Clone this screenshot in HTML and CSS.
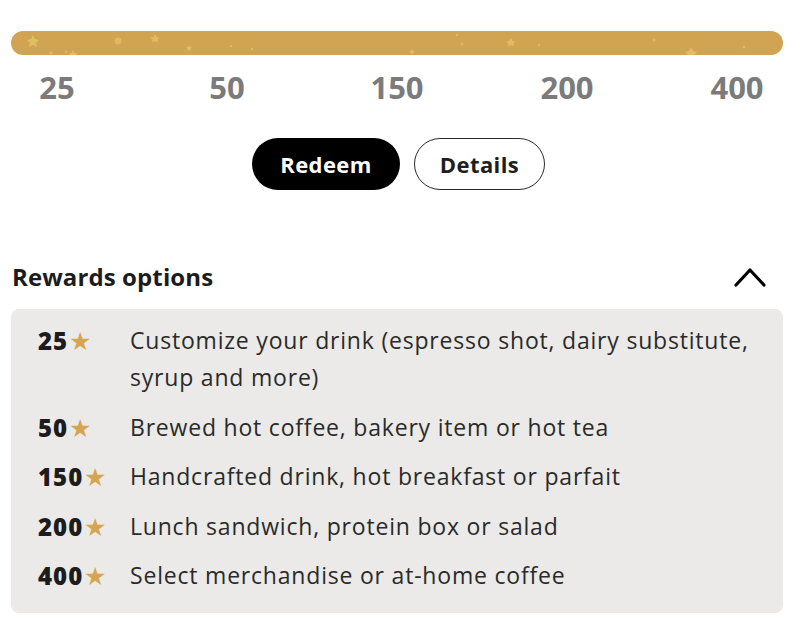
FILE: index.html
```html
<!DOCTYPE html>
<html>
<head>
  <title>Rewards</title>
  <link rel="stylesheet" href="styles.css">
</head>
<body>
  <div class="page">
    <div class="progress">
      <svg class="sparkles" width="772" height="24" viewBox="0 0 772 24">
        <g fill="#e8c466" opacity="0.8">
          <path d="M22 4 l2 4 4 1 -3 3 1 4 -4 -2 -4 2 1 -4 -3 -3 4 -1z"/>
          <path d="M144 3 l1.5 3 3 .5 -2 2 .5 3 -3 -1.5 -3 1.5 .5 -3 -2 -2 3 -.5z"/>
          <path d="M62 19 l1.5 3 3 .5 -2 2 .5 3 -3 -1.5 -3 1.5 .5 -3 -2 -2 3 -.5z"/>
          <path d="M178 14 l1 2 2 .4 -1.5 1.4 .4 2 -1.9 -1 -1.9 1 .4 -2 -1.5 -1.4 2 -.4z"/>
          <path d="M500 7 l1.5 3 3 .5 -2 2 .5 3 -3 -1.5 -3 1.5 .5 -3 -2 -2 3 -.5z"/>
          <path d="M680 16 l2 4 4 1 -3 3 1 4 -4 -2 -4 2 1 -4 -3 -3 4 -1z"/>
        </g>
        <g fill="#e8c466" opacity="0.7">
          <circle cx="107" cy="10" r="3.5"/>
          <circle cx="220" cy="15" r="1.2"/>
          <circle cx="241" cy="18" r="1.2"/>
          <circle cx="401" cy="21" r="2"/>
          <circle cx="446" cy="4" r="1.2"/>
          <circle cx="451" cy="13" r="1.5"/>
          <circle cx="528" cy="14" r="1.2"/>
          <circle cx="643" cy="9" r="1.5"/>
          <circle cx="733" cy="16" r="1.5"/>
          <circle cx="40" cy="22" r="1.5"/>
          <circle cx="55" cy="21" r="1.5"/>
        </g>
      </svg>
    </div>

    <div class="levels">
      <span>25</span>
      <span>50</span>
      <span>150</span>
      <span>200</span>
      <span>400</span>
    </div>

    <div class="actions">
      <button class="btn btn-dark">Redeem</button>
      <button class="btn btn-outline">Details</button>
    </div>

    <div class="section-head">
      <h2>Rewards options</h2>
      <svg class="chevron" width="32" height="20" viewBox="0 0 32 20">
        <path d="M2 18 L16 3 L30 18" fill="none" stroke="#000" stroke-width="3.2" stroke-linecap="round" stroke-linejoin="round"/>
      </svg>
    </div>

    <div class="options">
      <div class="option">
        <div class="cost">25<span class="star">★</span></div>
        <div class="desc">Customize your drink (espresso shot, dairy substitute, syrup and more)</div>
      </div>
      <div class="option">
        <div class="cost">50<span class="star">★</span></div>
        <div class="desc">Brewed hot coffee, bakery item or hot tea</div>
      </div>
      <div class="option">
        <div class="cost">150<span class="star">★</span></div>
        <div class="desc">Handcrafted drink, hot breakfast or parfait</div>
      </div>
      <div class="option">
        <div class="cost">200<span class="star">★</span></div>
        <div class="desc">Lunch sandwich, protein box or salad</div>
      </div>
      <div class="option">
        <div class="cost">400<span class="star">★</span></div>
        <div class="desc">Select merchandise or at-home coffee</div>
      </div>
    </div>
  </div>
</body>
</html>
```

FILE: styles.css
```css
body {
  margin: 0;
  background: #fff;
  font-family: "Open Sans", Arial, sans-serif;
  color: #1f1f1f;
}

.page {
  padding: 31px 17px 0 11px;
}

.progress {
  height: 24px;
  border-radius: 12px;
  background-color: #d0a453;
  overflow: hidden;
}

.sparkles {
  display: block;
}

.levels {
  display: grid;
  grid-template-columns: repeat(5, 110px);
  column-gap: 60px;
  margin: 12px 0 0 -9px;
  font-size: 31px;
  font-weight: 700;
  color: #7b7b7b;
  text-align: center;
  line-height: 40px;
}

.actions {
  display: flex;
  justify-content: center;
  gap: 14px;
  margin-top: 31px;
  padding-left: 3px;
}

.btn {
  height: 52px;
  border-radius: 26px;
  font-family: "Open Sans", Arial, sans-serif;
  font-size: 22px;
  font-weight: 700;
  letter-spacing: 0.4px;
}

.btn-dark {
  width: 148px;
  background: #000;
  color: #fff;
  border: none;
}

.btn-outline {
  width: 131px;
  background: #fff;
  color: #1e1e1e;
  border: 1.5px solid #2a2a2a;
}

.section-head {
  display: flex;
  justify-content: space-between;
  align-items: center;
  margin-top: 70px;
}

.section-head h2 {
  margin: 0;
  padding-left: 1px;
  font-size: 24px;
  font-weight: 700;
  letter-spacing: 0.1px;
  color: #1c1c1c;
}

.chevron {
  display: block;
  margin-right: 17px;
}

.options {
  margin-top: 16px;
  padding: 13px 0 19px 27px;
  background: #ebeae8;
  border-radius: 8px;
  display: flex;
  flex-direction: column;
  gap: 12.5px;
}

.option {
  display: flex;
  font-size: 23px;
  line-height: 37px;
}

.cost {
  width: 92px;
  flex: none;
  font-size: 24px;
  font-weight: 800;
  letter-spacing: 1px;
  color: #1c1c1c;
}

.star {
  margin-left: 1px;
  font-size: 25px;
  color: #d6a54f;
  font-weight: 400;
}

.desc {
  max-width: 630px;
  color: #2a2a2a;
  letter-spacing: 0.8px;
}
```
